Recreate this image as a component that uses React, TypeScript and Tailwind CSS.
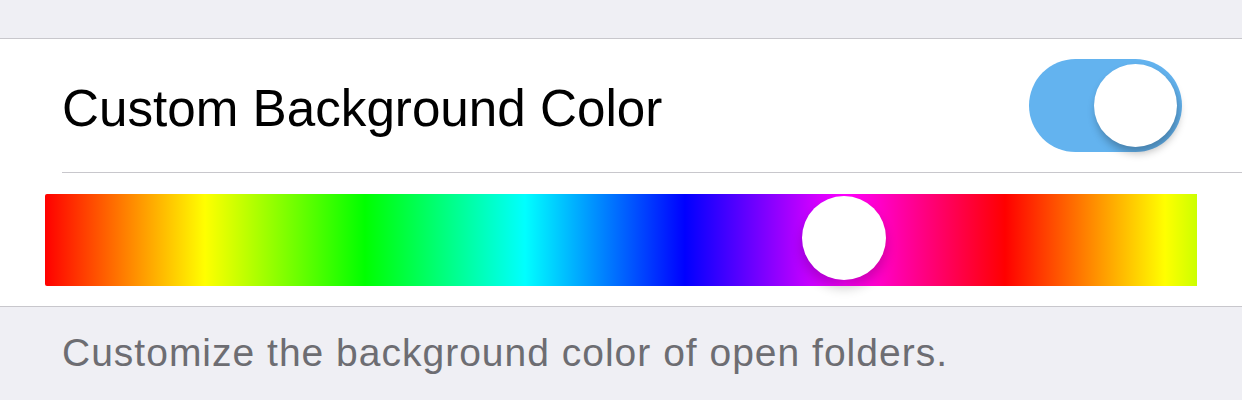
import React from "react";

export default function App() {
  return (
    <div
      className="w-[1242px] h-[400px] bg-[#efeff4] flex flex-col overflow-hidden"
      style={{ fontFamily: '"Liberation Sans", Arial, sans-serif' }}
    >
      <div className="h-[38px] shrink-0" />
      <div className="bg-white border-t border-b border-[#c8c7cc] flex flex-col">
        {/* Row 1 */}
        <div className="pl-[62px]">
          <div className="h-[134px] flex items-center justify-between pr-[60px] border-b border-[#c8c7cc]">
            <span className="text-[51.2px] leading-[51px] text-black mt-[6px]">
              Custom Background Color
            </span>
            <div className="w-[153px] h-[93px] rounded-full bg-[#63b3ef] flex items-center justify-end pr-[5px] -mt-[1px]">
              <div className="w-[83px] h-[83px] rounded-full bg-white shadow-[2px_6px_8px_rgba(0,0,0,0.28)]" />
            </div>
          </div>
        </div>
        {/* Row 2 */}
        <div className="h-[133px] pl-[45px] pt-[21px]">
          <div
            className="relative w-[1152px] h-[92px] rounded-l-[2px]"
            style={{
              background:
                "linear-gradient(to right, #ff0000 0%, #ffff00 13.889%, #00ff00 27.778%, #00ffff 41.667%, #0000ff 55.556%, #ff00ff 69.444%, #ff0000 83.333%, #ffff00 97.222%, #ccff00 100%)",
            }}
          >
            <div className="absolute left-[757px] top-[2px] w-[84px] h-[84px] rounded-full bg-white shadow-[0_8px_12px_rgba(0,0,0,0.2)]" />
          </div>
        </div>
      </div>
      <div className="pl-[62px] pt-[24px]">
        <p className="text-[39px] leading-[44px] tracking-[1px] text-[#6d6d72]">
          Customize the background color of open folders.
        </p>
      </div>
    </div>
  );
}
